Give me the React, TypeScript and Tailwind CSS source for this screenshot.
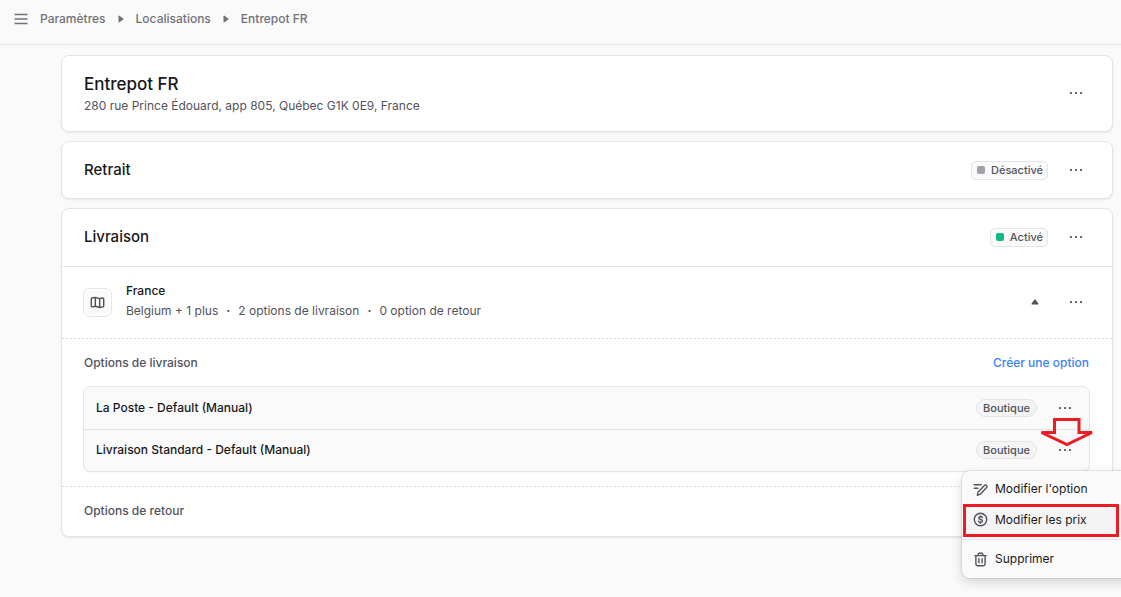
import type { ReactNode } from 'react'
import clsx from 'clsx'

const deliveryOptions = [
  { id: 'poste', name: 'La Poste - Default (Manual)', type: 'Boutique' },
  { id: 'standard', name: 'Livraison Standard - Default (Manual)', type: 'Boutique' },
]

export default function App() {
  return (
    <div className="min-h-screen overflow-hidden bg-[#fafafa] font-['Inter',sans-serif] text-xs leading-5 text-[#52525b]">
      <header className="flex h-[45px] items-center border-b border-[#e4e4e7] px-3 pb-[7px]">
        <button type="button" aria-label="Menu" className="flex h-5 w-[18px] items-center justify-center">
          <svg width="14" height="12" viewBox="0 0 14 12" fill="none" stroke="#71717a" strokeWidth="1.3">
            <path d="M0.5 1.5h13M0.5 6h13M0.5 10.5h13" />
          </svg>
        </button>
        <nav className="ml-[10px] flex items-center font-medium text-[#71717a]">
          <a href="#parametres">Paramètres</a>
          <Chevron />
          <a href="#localisations">Localisations</a>
          <Chevron />
          <span>Entrepot FR</span>
        </nav>
      </header>

      <main className="flex flex-col gap-[9px] pt-[10px] pr-2 pl-[61px]">
        <Card>
          <div className="flex h-[75px] items-center justify-between px-[22px] pb-px">
            <div className="pt-[2px]">
              <h1 className="text-[17px] leading-6 font-medium text-[#18181b]">Entrepot FR</h1>
              <p>280 rue Prince Édouard, app 805, Québec G1K 0E9, France</p>
            </div>
            <MoreButton />
          </div>
        </Card>

        <Card>
          <div className="flex h-14 items-center justify-between px-[22px]">
            <h2 className="text-[15px] font-medium text-[#18181b]">Retrait</h2>
            <div className="flex items-center gap-[14px]">
              <Status label="Désactivé" />
              <MoreButton />
            </div>
          </div>
        </Card>

        <Card>
          <div className="flex h-[58px] items-center justify-between border-b border-[#e4e4e7] px-[22px] pb-px">
            <h2 className="text-[15px] font-medium text-[#18181b]">Livraison</h2>
            <div className="flex items-center gap-[14px]">
              <Status label="Activé" active />
              <MoreButton />
            </div>
          </div>

          <div className="flex h-[71px] items-center justify-between px-[22px] pb-px">
            <div className="flex items-center gap-[15px]">
              <div className="flex size-[27px] items-center justify-center rounded-md bg-[#fafafa] inset-ring-2 inset-ring-white outline outline-[#e4e4e7]">
                <MapIcon />
              </div>
              <div className="pb-[2px]">
                <h3 className="font-medium text-[#18181b]">France</h3>
                <div className="flex gap-2">
                  <span>Belgium + 1 plus</span>
                  <span className="font-bold">·</span>
                  <span>2 options de livraison</span>
                  <span className="font-bold">·</span>
                  <span>0 option de retour</span>
                </div>
              </div>
            </div>
            <div className="flex items-center gap-[13px]">
              <button type="button" aria-label="Réduire" className="flex size-7 items-center justify-center">
                <svg width="8" height="6" viewBox="0 0 8 6" fill="#52525b">
                  <path d="M3.4 0.7a.75.75 0 0 1 1.2 0L7.4 4.5c.3.5 0 1-.6 1H1.2c-.6 0-.9-.5-.6-1z" />
                </svg>
              </button>
              <MoreButton />
            </div>
          </div>

          <Divider />

          <div className="py-[14px] pr-[23px] pl-[22px]">
            <div className="flex items-center justify-between font-medium">
              <h4>Options de livraison</h4>
              <a href="#creer" className="text-[#3b82f6]">Créer une option</a>
            </div>
            <ul className="mt-[14px] mb-px divide-y divide-[#e4e4e7] rounded-md bg-[#fafafa] shadow-[0_1px_2px_rgba(0,0,0,0.08)] outline outline-[#e4e4e7]">
              {deliveryOptions.map((option) => (
                <li key={option.id} className="flex h-[41px] items-center justify-between pr-[10px] pl-3 first:h-[43px] last:pb-px">
                  <span className="font-medium text-[#18181b]">{option.name}</span>
                  <div className="flex items-center gap-[14px]">
                    <span className="flex h-[18px] items-center rounded-full border border-[#e4e4e7] bg-[#f4f4f5] px-[6px] text-[11px] font-medium">
                      {option.type}
                    </span>
                    <div className="relative flex">
                      <MoreButton />
                      {option.id === 'standard' && (
                        <>
                          <ActionMenu />
                          <ArrowMarker />
                        </>
                      )}
                    </div>
                  </div>
                </li>
              ))}
            </ul>
          </div>

          <Divider />

          <div className="px-[22px] pt-[14px] pb-[15px]">
            <h4 className="font-medium">Options de retour</h4>
          </div>
        </Card>
      </main>
    </div>
  )
}

function Card({ children }: { children: ReactNode }) {
  return (
    <section className="rounded-lg border border-[#e4e4e7] bg-white shadow-[0_1px_2px_rgba(0,0,0,0.08)]">
      {children}
    </section>
  )
}

function Divider() {
  return (
    <div className="h-px bg-[repeating-linear-gradient(90deg,#dcdce0_0_2px,transparent_2px_4px)]" />
  )
}

function Chevron() {
  return (
    <span className="flex w-[30px] justify-center">
      <svg width="6" height="8" viewBox="0 0 6 8" fill="#71717a">
        <path d="M0.5 1.3c0-.6.5-.9 1-.6l3.7 2.7c.4.3.4.9 0 1.2L1.5 7.3c-.5.3-1 0-1-.6z" />
      </svg>
    </span>
  )
}

function Status({ label, active }: { label: string; active?: boolean }) {
  return (
    <span className="flex h-[19px] items-center gap-[6px] rounded-[5px] border border-[#e4e4e7] bg-[#fafafa] pr-1 pl-[5px] text-[11px] font-medium">
      <span className={clsx('size-2 rounded-[2px]', active ? 'bg-[#10b981]' : 'bg-[#a1a1aa]')} />
      {label}
    </span>
  )
}

function MoreButton() {
  return (
    <button type="button" aria-label="Actions" className="flex size-7 items-center justify-center">
      <svg width="14" height="4" viewBox="0 0 14 4" fill="#52525b">
        <rect x="1" y="1" width="2" height="2" rx="0.4" />
        <rect x="6" y="1" width="2" height="2" rx="0.4" />
        <rect x="11" y="1" width="2" height="2" rx="0.4" />
      </svg>
    </button>
  )
}

function ActionMenu() {
  return (
    <div
      role="menu"
      className="absolute top-[35px] -left-[89px] z-10 w-[172px] rounded-lg bg-[#fafafa] pt-[3px] pb-1 text-[#18181b] shadow-[0_0_0_1px_rgba(0,0,0,0.08),0_4px_12px_rgba(0,0,0,0.16)]"
    >
      <button type="button" role="menuitem" className="flex h-[30px] w-full items-center gap-[7px] px-[11px]">
        <EditIcon />
        Modifier l'option
      </button>
      <button
        type="button"
        role="menuitem"
        className="ml-px flex h-[33px] w-[156px] items-center gap-[7px] border-3 border-[#ed1c24] bg-[#f4f4f5] px-[7px] pb-[2px]"
      >
        <DollarIcon />
        Modifier les prix
      </button>
      <div className="mt-[2px] mb-1 h-px bg-[#e4e4e7]" />
      <button type="button" role="menuitem" className="flex h-[30px] w-full items-center gap-[7px] px-[11px]">
        <TrashIcon />
        Supprimer
      </button>
    </div>
  )
}

function ArrowMarker() {
  return (
    <svg
      className="pointer-events-none absolute -top-[19px] -left-[11px] z-20"
      width="54"
      height="30"
      viewBox="0 0 54 30"
      fill="none"
      stroke="#ed1c24"
      strokeWidth="3"
    >
      <path d="M14.5 2.5h24.5v13h13L27 27.5 1.5 15.5h13z" />
    </svg>
  )
}

function MapIcon() {
  return (
    <svg width="15" height="15" viewBox="0 0 15 15" fill="none" stroke="#52525b" strokeWidth="1.4" strokeLinejoin="round" strokeLinecap="round">
      <path d="M5.3 2.4 2.1 3a1 1 0 0 0-.8 1v6.9a1 1 0 0 0 1.2 1l2.8-.6 4.4 1.2 3.2-.6a1 1 0 0 0 .8-1V4a1 1 0 0 0-1.2-1l-2.8.6zM5.3 2.4v8.9M9.7 3.6v8.9" />
    </svg>
  )
}

function EditIcon() {
  return (
    <svg width="15" height="15" viewBox="0 0 15 15" fill="none" stroke="#52525b" strokeWidth="1.4" strokeLinecap="round" strokeLinejoin="round">
      <path d="M1.2 2.8h7M1.2 6.3h3.6M4.3 13.3l.8-3.2 6.3-6.6a1.5 1.5 0 0 1 2.2 2.1l-6.3 6.6z" />
    </svg>
  )
}

function DollarIcon() {
  return (
    <svg width="15" height="15" viewBox="0 0 15 15" fill="none" stroke="#52525b" strokeWidth="1.4" strokeLinecap="round">
      <circle cx="7.5" cy="7.5" r="6.2" />
      <path d="M9.3 5.7C9 5.1 8.3 4.8 7.5 4.8c-1 0-1.8.4-1.8 1.3 0 1.9 3.7.8 3.7 2.8 0 .9-.9 1.4-1.9 1.4-.9 0-1.7-.4-1.9-1.1M7.5 3.9v.9M7.5 10.3v.9" />
    </svg>
  )
}

function TrashIcon() {
  return (
    <svg width="15" height="15" viewBox="0 0 15 15" fill="none" stroke="#52525b" strokeWidth="1.4" strokeLinecap="round" strokeLinejoin="round">
      <path d="M1.9 3.6h11.2M4.9 3.6l.4-1.5a1 1 0 0 1 1-.8h2.4a1 1 0 0 1 1 .8l.4 1.5M2.9 3.8v8.3c0 .9.7 1.6 1.6 1.6h6c.9 0 1.6-.7 1.6-1.6V3.8M5.9 6.8v4M9.1 6.8v4" />
    </svg>
  )
}
